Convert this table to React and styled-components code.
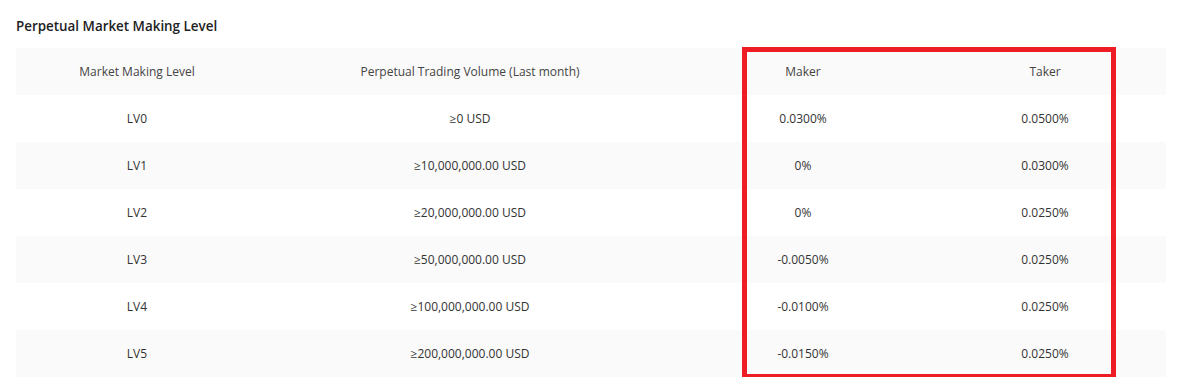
import styled, { createGlobalStyle } from "styled-components";

const GlobalStyle = createGlobalStyle`
  body {
    margin: 0;
    background: #ffffff;
    font-family: "Open Sans", "Noto Sans", sans-serif;
    color: #333333;
  }
`;

const Page = styled.div`
  padding: 17px 16px 0 16px;
  width: 1150px;
`;

const Title = styled.h2`
  margin: 0 0 13px 0;
  font-size: 13.4px;
  font-weight: 600;
  color: #222222;
  line-height: 18px;
`;

const TableWrap = styled.div`
  position: relative;
`;

const Row = styled.div`
  display: grid;
  grid-template-columns: 242px 424px 242px 242px;
  height: 47px;
  align-items: center;
  background: ${(props) => (props.$shaded ? "#fafafa" : "#ffffff")};
`;

const Cell = styled.div`
  text-align: center;
  font-size: 12px;
  color: ${(props) => (props.$head ? "#444444" : "#333333")};
`;

const Highlight = styled.div`
  position: absolute;
  left: 726px;
  top: -1px;
  width: 364px;
  height: 322px;
  border: 5px solid #ee1c25;
  pointer-events: none;
`;

const rows = [
  ["LV0", "≥0 USD", "0.0300%", "0.0500%"],
  ["LV1", "≥10,000,000.00 USD", "0%", "0.0300%"],
  ["LV2", "≥20,000,000.00 USD", "0%", "0.0250%"],
  ["LV3", "≥50,000,000.00 USD", "-0.0050%", "0.0250%"],
  ["LV4", "≥100,000,000.00 USD", "-0.0100%", "0.0250%"],
  ["LV5", "≥200,000,000.00 USD", "-0.0150%", "0.0250%"],
];

const App = () => {
  return (
    <>
      <GlobalStyle />
      <Page>
        <Title>Perpetual Market Making Level</Title>
        <TableWrap>
          <Row $shaded>
            <Cell $head>Market Making Level</Cell>
            <Cell $head>Perpetual Trading Volume (Last month)</Cell>
            <Cell $head>Maker</Cell>
            <Cell $head>Taker</Cell>
          </Row>
          {rows.map((r, i) => (
            <Row key={r[0]} $shaded={i % 2 === 1}>
              {r.map((c, j) => (
                <Cell key={j}>{c}</Cell>
              ))}
            </Row>
          ))}
          <Highlight />
        </TableWrap>
      </Page>
    </>
  );
};

export default App;
